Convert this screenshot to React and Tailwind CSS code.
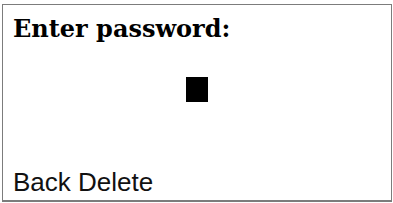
export default function App() {
  return (
    <div className="w-[393px] h-[203px] bg-white overflow-hidden">
      <div className="ml-[2px] mt-[4px] w-[390px] h-[198px] border border-b-2 border-[#7c7c7c] flex flex-col pl-[10px] pt-[12px] pb-[5px]">
        <div
          className="text-[24px] leading-none font-bold text-black"
          style={{ fontFamily: '"DejaVu Serif", serif' }}
        >
          Enter password:
        </div>
        <div className="flex justify-center mt-[36px] pr-[10px]">
          <div className="w-[22px] h-[25px] bg-black" />
        </div>
        <div
          className="mt-auto text-[26px] leading-none text-[#111]"
          style={{ fontFamily: '"Liberation Sans", Arial, sans-serif' }}
        >
          Back Delete
        </div>
      </div>
    </div>
  );
}
